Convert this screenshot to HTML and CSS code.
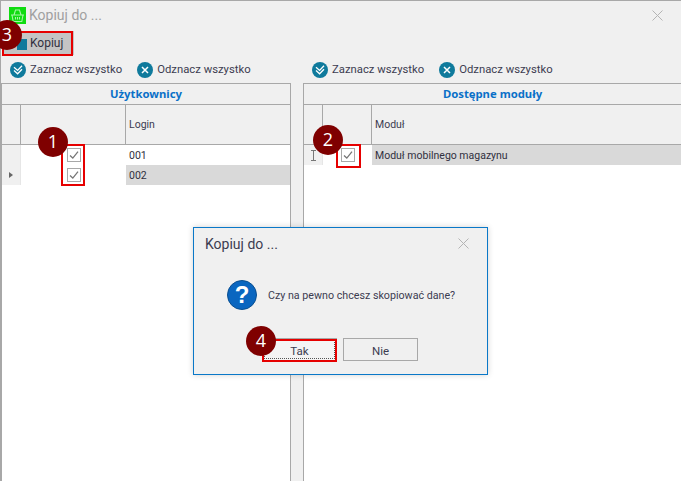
FILE: index.html
```html
<!DOCTYPE html>
<html lang="pl">
<head>
<meta charset="utf-8">
<title>Kopiuj do ...</title>
<link rel="stylesheet" href="styles.css">
</head>
<body>
<svg class="defs" width="0" height="0" aria-hidden="true">
  <symbol id="i-check" viewBox="0 0 14 14"><rect x="0.5" y="0.5" width="13" height="13" fill="#fff" stroke="#a8a8a8"/><path d="M3 7.500l2.800 2.600L11 3.600" fill="none" stroke="#777" stroke-width="1.3"/></symbol>
  <symbol id="i-all" viewBox="0 0 16 16"><circle cx="8" cy="8" r="8" fill="#0f7a9c"/><path d="M4 5.200l3.600 3.200L12 3.800M4 8.600l3.600 3.200L12 7.200" fill="none" stroke="#fff" stroke-width="1.3"/></symbol>
  <symbol id="i-none" viewBox="0 0 16 16"><circle cx="8" cy="8" r="8" fill="#0f7a9c"/><path d="M5 5l6 6M11 5l-6 6" fill="none" stroke="#fff" stroke-width="1.5"/></symbol>
  <symbol id="i-close" viewBox="0 0 11 11"><path d="M0.5 0.5l10 10M10.500 0.5l-10 10" fill="none" stroke="#b4b4b4" stroke-width="1"/></symbol>
</svg>
<div class="window">
  <header class="titlebar">
    <span class="app-icon">
      <svg width="17" height="17" viewBox="0 0 17 17"><path d="M2 8h13M3 8l1.200 6.500h8.600L14 8M5 8l1.500-5h4L12 8M6.500 10v2.500M8.500 10v2.500M10.500 10v2.500" fill="none" stroke="#a6f5a6" stroke-width="1.1"/></svg>
    </span>
    <span class="title-text">Kopiuj do ...</span>
    <svg class="win-close" width="11" height="11"><use href="#i-close"/></svg>
  </header>
  <div class="toolbar">
    <button class="copy-btn">
      <span class="copy-icon"></span>
      <span>Kopiuj</span>
    </button>
  </div>
  <div class="columns">
    <section class="col col-left">
      <div class="actions">
        <span class="action"><svg width="16" height="16"><use href="#i-all"/></svg>Zaznacz wszystko</span>
        <span class="action"><svg width="16" height="16"><use href="#i-none"/></svg>Odznacz wszystko</span>
      </div>
      <div class="panel">
        <div class="panel-title">Użytkownicy</div>
        <div class="head-row head-left">
          <div class="head-cell"></div>
          <div class="head-cell"></div>
          <div class="head-cell head-label">Login</div>
        </div>
        <div class="row row-left">
          <div class="gutter"></div>
          <div class="check-cell"><svg width="14" height="14"><use href="#i-check"/></svg></div>
          <div class="value">001</div>
        </div>
        <div class="row row-left">
          <div class="gutter"><span class="arrow"></span></div>
          <div class="check-cell"><svg width="14" height="14"><use href="#i-check"/></svg></div>
          <div class="value selected">002</div>
        </div>
      </div>
    </section>
    <section class="col col-right">
      <div class="actions">
        <span class="action"><svg width="16" height="16"><use href="#i-all"/></svg>Zaznacz wszystko</span>
        <span class="action"><svg width="16" height="16"><use href="#i-none"/></svg>Odznacz wszystko</span>
      </div>
      <div class="panel">
        <div class="panel-title">Dostępne moduły</div>
        <div class="head-row head-right">
          <div class="head-cell"></div>
          <div class="head-cell"></div>
          <div class="head-cell head-label">Moduł</div>
        </div>
        <div class="row row-right">
          <div class="gutter">
            <svg width="5" height="11" viewBox="0 0 5 11"><path d="M0 .5h5M0 10.500h5M2.500 .5v10" fill="none" stroke="#777"/></svg>
          </div>
          <div class="check-cell"><svg width="14" height="14"><use href="#i-check"/></svg></div>
          <div class="value selected">Moduł mobilnego magazynu</div>
        </div>
      </div>
    </section>
  </div>
</div>

<div class="dialog">
  <div class="dialog-head">
    <span>Kopiuj do ...</span>
    <svg class="dialog-close" width="11" height="11"><use href="#i-close"/></svg>
  </div>
  <div class="dialog-body">
    <svg width="30" height="30" viewBox="0 0 30 30"><circle cx="15" cy="15" r="14.500" fill="#0a66c0" stroke="#0b4f8f"/><text class="q-mark" x="15" y="23" text-anchor="middle">?</text></svg>
    <span>Czy na pewno chcesz skopiować dane?</span>
  </div>
  <div class="dialog-buttons">
    <button class="dlg-btn dlg-primary">Tak</button>
    <button class="dlg-btn">Nie</button>
  </div>
</div>

<div class="mark mark-box-1"></div>
<div class="mark mark-box-2"></div>
<div class="mark mark-box-3"></div>
<div class="mark mark-box-4"></div>
<div class="badge badge-1">1</div>
<div class="badge badge-2">2</div>
<div class="badge badge-3">3</div>
<div class="badge badge-4">4</div>
</body>
</html>
```
FILE: styles.css
```css
* { box-sizing: border-box; }
html, body { margin: 0; height: 100%; }
body {
  position: relative;
  width: 681px;
  height: 481px;
  overflow: hidden;
  background: #f0f0f0;
  font-family: Roboto, "Noto Sans", sans-serif;
  font-size: 11.3px;
  color: #3c3c50;
}
.defs { position: absolute; }
.window {
  height: 481px;
  border-top: 1px solid #a8a8a8;
  border-left: 1px solid #a8a8a8;
  display: flex;
  flex-direction: column;
}
.titlebar {
  height: 29px;
  display: flex;
  align-items: center;
  padding: 0 18px 1px 8px;
  color: #a0a0a0;
  font-size: 14px;
  flex: none;
}
.app-icon {
  width: 17px;
  height: 17px;
  margin-right: 3px;
  background: #10dc10;
  display: flex;
  align-items: center;
  justify-content: center;
}
.title-text { flex: 1; }
.toolbar { height: 26px; padding: 1px 0 0 2px; flex: none; }
.copy-btn {
  width: 71px;
  height: 24px;
  border: 0;
  background: #c4c4c4;
  padding: 0 0 0 14px;
  display: flex;
  align-items: center;
  gap: 3px;
  font: inherit;
  font-size: 12px;
  color: #303040;
}
.copy-icon {
  width: 10px;
  height: 11px;
  margin-top: 3px;
  background: #0f7a9c;
}
.columns { flex: 1; display: flex; min-height: 0; }
.col { display: flex; flex-direction: column; }
.col-left { width: 290px; }
.col-right { flex: 1; margin-left: 12px; min-width: 0; }
.actions {
  height: 27px;
  display: flex;
  align-items: center;
  gap: 15px;
  padding: 0 0 0 9px;
  flex: none;
}
.action { display: flex; align-items: center; gap: 4px; }
.panel {
  flex: 1;
  background: #fff;
  border: 1px solid #a8a8a8;
  border-bottom: 0;
}
.col-right .panel { border-right: 0; }
.panel-title {
  height: 21px;
  background: #f0f0f0;
  border-bottom: 1px solid #a8a8a8;
  text-align: center;
  color: #0a70c8;
  font-family: "Noto Sans", sans-serif;
  font-weight: 700;
  font-size: 11.3px;
  line-height: 20px;
}
.head-row {
  height: 40px;
  display: grid;
  background: #f0f0f0;
  border-bottom: 1px solid #a8a8a8;
}
.head-left, .row-left { grid-template-columns: 19px 105px 1fr; }
.head-right, .row-right { grid-template-columns: 19px 49px 1fr; }
.head-cell { border-right: 1px solid #a8a8a8; }
.head-cell:last-child { border-right: 0; }
.head-label { display: flex; align-items: center; padding: 0 0 1px 3px; font-size: 10.5px; }
.row { height: 20px; display: grid; }
.gutter {
  background: #f0f0f0;
  border-right: 1px solid #e6e6e6;
  display: flex;
  align-items: center;
  padding-left: 7px;
}
.arrow {
  width: 0;
  height: 0;
  border-left: 4px solid #666;
  border-top: 3.5px solid transparent;
  border-bottom: 3.5px solid transparent;
}
.check-cell { display: flex; align-items: center; justify-content: center; }
.value { display: flex; align-items: center; padding: 0 0 0 3px; font-size: 10.5px; color: #303040; }
.selected { background: #d9d9d9; }

.dialog {
  position: absolute;
  left: 193px;
  top: 227px;
  width: 295px;
  height: 148px;
  background: #f0f0f0;
  border: 1px solid #0a78c8;
  box-shadow: 0 0 6px rgba(0, 0, 0, .18);
  display: flex;
  flex-direction: column;
}
.dialog-head {
  height: 32px;
  padding: 0 18px 0 11px;
  display: flex;
  align-items: center;
  justify-content: space-between;
  font-size: 14px;
}
.dialog-close { margin-top: -1px; }
.dialog-body {
  height: 52px;
  padding: 18px 0 0 33px;
  display: flex;
  align-items: center;
  gap: 11px;
  font-size: 10.7px;
  flex: none;
}
.q-mark { font-size: 24px; font-weight: 700; fill: #fff; font-family: "Liberation Sans", sans-serif; }
.dialog-buttons {
  display: flex;
  gap: 6px;
  padding: 26px 0 0 68px;
}
.dlg-btn {
  width: 75px;
  height: 23px;
  background: #f0f0f0;
  border: 1px solid #a8a8a8;
  font: inherit;
  font-size: 11.5px;
  color: #3c3c50;
  padding: 2px 0 0;
}
.dlg-primary { background: #f4f4f4; outline: 1px dotted #555; outline-offset: -3px; }

.mark { position: absolute; border: 2px solid #e60000; }
.mark-box-1 { left: 61px; top: 144px; width: 24px; height: 42px; }
.mark-box-2 { left: 336px; top: 144px; width: 25px; height: 24px; }
.mark-box-3 { left: 2px; top: 31px; width: 71px; height: 25px; }
.mark-box-4 { left: 262px; top: 339px; width: 75px; height: 23px; }
.badge {
  position: absolute;
  width: 30px;
  height: 30px;
  border-radius: 50%;
  background: #7f0000;
  color: #fff;
  font-size: 18px;
  line-height: 29px;
  text-align: center;
  font-family: "Open Sans", sans-serif;
}
.badge-1 { left: 38px; top: 127px; }
.badge-2 { left: 313px; top: 125px; }
.badge-3 { left: -8px; top: 20px; }
.badge-4 { left: 246px; top: 326px; }
```
